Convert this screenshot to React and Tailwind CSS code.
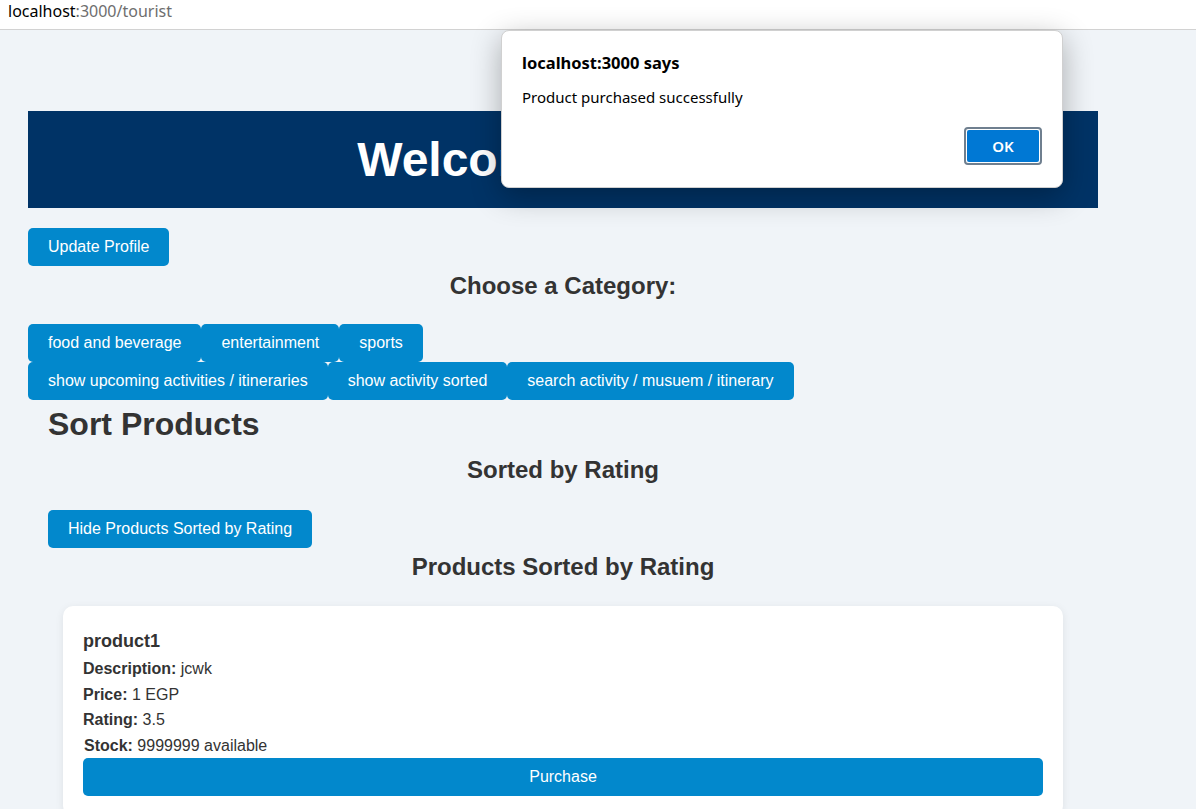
export default function App() {
  const btn =
    "bg-[#0288cc] text-white text-[16px] leading-[18px] h-[38px] px-[20px] rounded-[5px] flex items-center justify-center whitespace-nowrap";
  return (
    <div className="relative min-h-screen bg-[#f0f4f8] font-['Liberation_Sans',Arial,sans-serif] text-[#333]">
      {/* URL bar */}
      <div className="h-[30px] bg-white border-b border-[#d2d2d2] pl-[8px] font-['Noto_Sans',sans-serif] text-[16px] leading-[22px]">
        <span className="text-black">localhost</span>
        <span className="text-[#6e6e6e]">:3000/tourist</span>
      </div>

      <div className="w-[1070px] ml-[28px] pt-[81px] pb-[40px]">
        {/* Header */}
        <div className="h-[97px] bg-[#003366] flex items-center justify-center">
          <h1 className="text-white font-bold text-[48px] leading-[55px]">Welcome, Tourist!</h1>
        </div>

        <div className="mt-[20px] flex">
          <button className={btn}>Update Profile</button>
        </div>

        <h2 className="mt-[6px] h-[28px] text-[24px] leading-[28px] font-bold text-center">
          Choose a Category:
        </h2>

        <div className="mt-[24px] flex">
          <button className={btn}>food and beverage</button>
          <button className={btn}>entertainment</button>
          <button className={btn}>sports</button>
        </div>
        <div className="flex">
          <button className={btn}>show upcoming activities / itineraries</button>
          <button className={btn}>show activity sorted</button>
          <button className={btn}>search activity / musuem / itinerary</button>
        </div>

        {/* Sort products section */}
        <div className="px-[20px]">
          <h1 className="mt-[6px] h-[37px] text-[32px] leading-[37px] font-bold">Sort Products</h1>
          <h2 className="mt-[13px] h-[28px] text-[24px] leading-[28px] font-bold text-center">
            Sorted by Rating
          </h2>
          <div className="mt-[26px] flex">
            <button className={btn}>Hide Products Sorted by Rating</button>
          </div>
          <h2 className="mt-[5px] h-[28px] text-[24px] leading-[28px] font-bold text-center">
            Products Sorted by Rating
          </h2>

          <div className="mt-[25px] w-[1000px] mx-auto bg-white rounded-[10px] shadow-[0_2px_8px_rgba(0,0,0,0.08)] px-[20px] pt-[25px] pb-[20px]">
            <h3 className="h-[21px] text-[18px] leading-[21px] font-bold">product1</h3>
            <div className="mt-[4px] text-[16px] leading-[25.5px]">
              <p><span className="font-bold">Description:</span> jcwk</p>
              <p><span className="font-bold">Price:</span> 1 EGP</p>
              <p><span className="font-bold">Rating:</span> 3.5</p>
              <p className="pl-[1px]"><span className="font-bold">Stock:</span> 9999999 available</p>
            </div>
            <button className={btn + " w-full"}>Purchase</button>
          </div>
        </div>
      </div>

      {/* Alert dialog */}
      <div className="absolute left-[501px] top-[30px] w-[562px] h-[158px] bg-white rounded-[8px] border border-[#d0d0d0] shadow-[0_8px_30px_rgba(0,0,0,0.3)] font-['Noto_Sans',sans-serif] text-black px-[20px] pt-[20px]">
        <div className="text-[16.5px] leading-[24px] font-bold">localhost:3000 says</div>
        <div className="mt-[11px] text-[15px] leading-[22px]">Product purchased successfully</div>
        <div className="flex justify-end mt-[19px]">
          <div className="w-[78px] h-[38px] rounded-[4px] border-2 border-[#6f7f8f] p-[1px] bg-white">
            <div className="w-full h-full rounded-[2px] bg-[#0078d4] flex items-center justify-center text-white text-[15px] font-semibold">
              OK
            </div>
          </div>
        </div>
      </div>
    </div>
  );
}
